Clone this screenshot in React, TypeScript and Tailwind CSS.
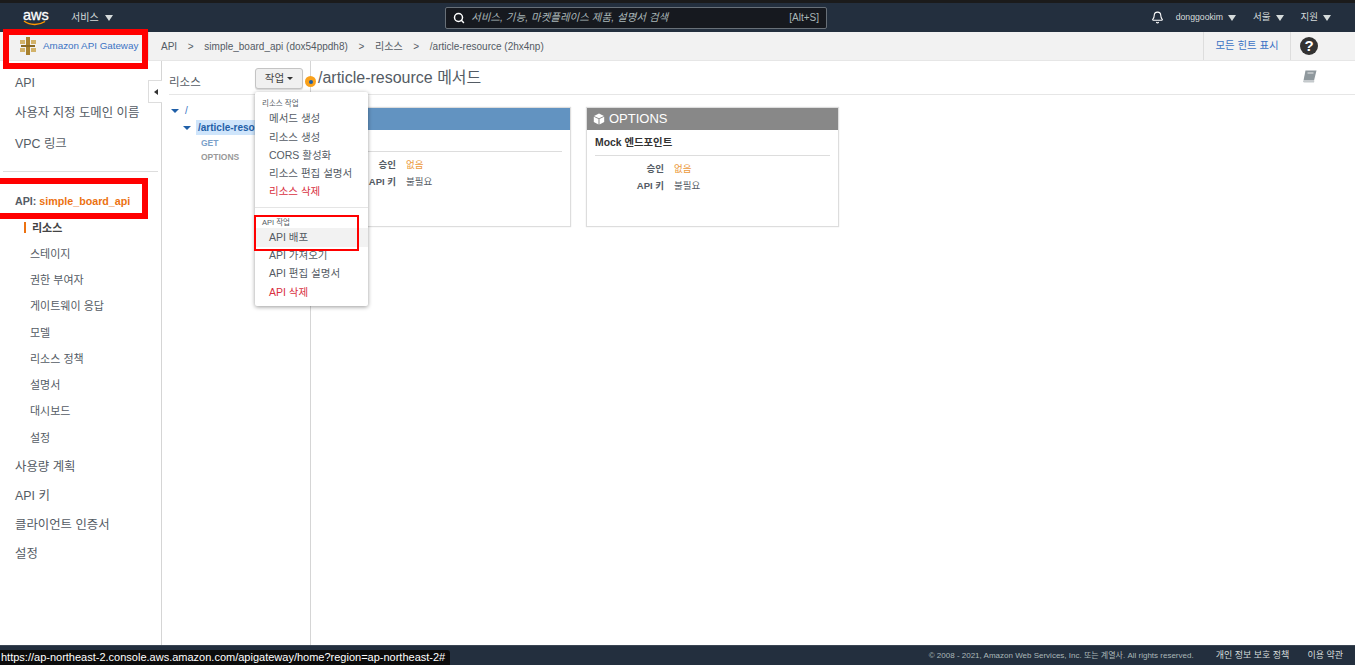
import { Bell, Search } from 'lucide-react';

const font = "font-['Liberation_Sans','Noto_Sans_CJK_KR',sans-serif]";

function Caret() {
  return <span className="inline-block w-0 h-0 border-x-[4px] border-x-transparent border-t-[6px] border-t-[#d5dbdb]" />;
}

function GatewayLogo() {
  return (
    <svg width="16" height="18" viewBox="0 0 16 18">
      <rect x="6" y="0" width="4" height="18" fill="#a9822f" />
      <rect x="0" y="3" width="5" height="4" fill="#d2b269" />
      <rect x="11" y="3" width="5" height="4" fill="#d2b269" />
      <rect x="1" y="8" width="14" height="2" fill="#8a6a25" />
      <rect x="0" y="11" width="5" height="4" fill="#d2b269" />
      <rect x="11" y="11" width="5" height="4" fill="#d2b269" />
    </svg>
  );
}

function TopNav() {
  return (
    <header className="h-8 shrink-0 bg-[#232f3e] border-t-[3px] border-[#1b1b1b] flex items-center text-[#d5dbdb] text-[10px]">
      <div className="w-[71px] pl-[23px] flex flex-col items-start leading-none">
        <span className="text-[14.5px] text-white leading-[12px] [-webkit-text-stroke:0.3px_white]">aws</span>
        <svg width="24" height="6" viewBox="0 0 24 6" className="-mt-px">
          <path d="M1 1c6 4.5 15 4.5 21 .5" fill="none" stroke="#f90" strokeWidth="1.5" />
        </svg>
      </div>
      <div className="w-[374px] flex items-center gap-[6px]">
        <span>서비스</span>
        <Caret />
      </div>
      <div className="w-[382px] h-[22px] bg-[#16191f] border border-[#687078] rounded-[2px] flex items-center pl-[7px] pr-[7px]">
        <Search size={12} strokeWidth={3} className="text-white" />
        <span className="ml-[6px] italic text-[10.5px] text-[#aab7b8] flex-1">서비스, 기능, 마켓플레이스 제품, 설명서 검색</span>
        <span className="text-[#aab7b8]">[Alt+S]</span>
      </div>
      <div className="flex-1 flex items-center justify-end pr-[24px]">
        <Bell size={13} className="text-white mr-[12px]" />
        <span className="text-[8.7px] mr-[5px]">donggookim</span>
        <Caret />
        <span className="ml-[17px] mr-[5px] text-[9.5px]">서울</span>
        <Caret />
        <span className="ml-[17px] mr-[5px] text-[9.5px]">지원</span>
        <Caret />
      </div>
    </header>
  );
}

function Breadcrumbs() {
  return (
    <div className="h-[29px] shrink-0 bg-[#f2f2f2] flex items-center border-b border-[#e6e6e6] text-[10px] text-[#545b64]">
      <div className="w-[149px] h-full flex items-center pl-5 gap-[7px] border-r border-[#dddddd] text-[#3b73c4]">
        <GatewayLogo />
        <span className="text-[9.8px]">Amazon API Gateway</span>
      </div>
      <div className="flex-1 flex items-center pl-3 gap-[10.7px]">
        <span>API</span>
        <span>&gt;</span>
        <span>simple_board_api (dox54ppdh8)</span>
        <span>&gt;</span>
        <span>리소스</span>
        <span>&gt;</span>
        <span>/article-resource (2hx4np)</span>
      </div>
      <div className="w-[88px] h-full flex items-center justify-center border-x border-[#dddddd] text-[#3b73c4] text-[10.4px]">
        모든 힌트 표시
      </div>
      <div className="w-[64px] flex items-center pl-[9px]">
        <span className="w-[18px] h-[18px] rounded-full bg-[#333] text-white text-[15px] font-bold leading-[18px] text-center">?</span>
      </div>
    </div>
  );
}

function NavItem({ label, className = '' }: { label: string; className?: string }) {
  return <div className={`flex items-center ${className}`}>{label}</div>;
}

function Sidebar() {
  return (
    <aside className="w-[162px] shrink-0 border-r border-[#d5d5d5] text-[#545b64] text-[12.4px] relative">
      <div className="pl-[15px] pt-[8px]">
        <NavItem label="API" className="h-[29px]" />
        <NavItem label="사용자 지정 도메인 이름" className="h-[30px]" />
        <NavItem label="VPC 링크" className="h-[33px]" />
      </div>
      <div className="mx-[3px] mt-[10px] border-t border-[#dddddd]" />
      <div className="pl-[15px] mt-[14px] h-[30px] flex items-center font-bold text-[10.7px]">
        API:&nbsp;<span className="text-[#ec7211]">simple_board_api</span>
      </div>
      <div className="pl-[30px] text-[11px] -mt-[1px]">
        <div className="h-[26px] flex items-center pl-[2px] font-bold text-[#444] relative">
          <span className="absolute left-[-6px] top-[7px] w-[2px] h-[11px] bg-[#ec7211]" />
          리소스
        </div>
        {['스테이지', '권한 부여자', '게이트웨이 응답', '모델', '리소스 정책', '설명서', '대시보드', '설정'].map((t) => (
          <NavItem key={t} label={t} className="h-[26.25px]" />
        ))}
      </div>
      <div className="pl-[15px] mt-[2px]">
        {['사용량 계획', 'API 키', '클라이언트 인증서', '설정'].map((t) => (
          <NavItem key={t} label={t} className="h-[29px]" />
        ))}
      </div>
      {/* collapse tab */}
      <div className="absolute right-[-1px] top-[19px] w-[14px] h-[23px] bg-white border border-r-0 border-[#dddddd] flex items-center justify-center">
        <span className="w-0 h-0 border-y-[3px] border-y-transparent border-r-[4px] border-r-[#333]" />
      </div>
    </aside>
  );
}

function MenuItem({ label, danger, active }: { label: string; danger?: boolean; active?: boolean }) {
  return (
    <div className={`h-[18.3px] flex items-center pl-[14px] text-[10.5px] ${danger ? 'text-[#d9303f]' : 'text-[#545b64]'} ${active ? 'bg-[#f2f2f2]' : ''}`}>
      {label}
    </div>
  );
}

function ActionsMenu() {
  return (
    <div className="absolute left-[93px] top-[31px] w-[113px] h-[214px] bg-white rounded-[2px] shadow-[0_1px_4px_rgba(0,0,0,0.4)] pt-[7px] z-10">
      <div className="pl-[7px] text-[7.5px] leading-[10px] text-[#545b64]">리소스 작업</div>
      <div className="h-[1px]" />
      <MenuItem label="메서드 생성" />
      <MenuItem label="리소스 생성" />
      <MenuItem label="CORS 활성화" />
      <MenuItem label="리소스 편집 설명서" />
      <MenuItem label="리소스 삭제" danger />
      <div className="border-t border-[#e5e5e5] mt-[6px] mb-[10px]" />
      <div className="pl-[7px] text-[7.5px] leading-[10px] text-[#545b64]">API 작업</div>
      <MenuItem label="API 배포" active />
      <MenuItem label="API 가져오기" />
      <MenuItem label="API 편집 설명서" />
      <MenuItem label="API 삭제" danger />
    </div>
  );
}

function ResourcePanel() {
  return (
    <section className="w-[149px] shrink-0 border-r border-[#d5d5d5] relative text-[10px]">
      <div className="h-[34px] ml-[7px] pt-[11px] border-b border-[#e6e6e6] flex items-center text-[11.5px] text-[#545b64]">리소스</div>
      <div className="relative">
        <div className="pl-[9px] pt-[6px] h-[25px] flex items-center gap-[6px] text-[#3b73c4]">
          <span className="w-0 h-0 border-x-[4px] border-x-transparent border-t-[4px] border-t-[#1f5fa8]" />/
        </div>
        <div className="pl-[21px] flex items-center gap-[5px] h-[15px]">
          <span className="w-0 h-0 border-x-[4px] border-x-transparent border-t-[4px] border-t-[#1f5fa8]" />
          <span className="bg-[#cfe5fb] text-[#1f5fa8] font-bold pl-[2px] h-[15px] leading-[15px] flex-1 overflow-hidden whitespace-nowrap">/article-resource</span>
        </div>
        <div className="pl-[39px] pt-[1px] text-[8.5px] font-bold leading-[14px]">
          <div className="text-[#7aa0c9]">GET</div>
          <div className="text-[#999]">OPTIONS</div>
        </div>
      </div>
      {/* 작업 button */}
      <div className="absolute left-[93px] top-[7px] w-[48px] h-[21px] rounded-[3px] border border-[#c4c4c4] bg-[#f0f0f0] shadow-[0_1px_1px_rgba(0,0,0,0.15)] flex items-center justify-center gap-[3px] text-[10.5px] text-[#444]">
        작업
        <span className="w-0 h-0 border-x-[3px] border-x-transparent border-t-[3px] border-t-[#333]" />
      </div>
      <ActionsMenu />
      {/* hint dot */}
      <span className="absolute left-[143px] top-[15px] w-[11px] h-[11px] rounded-full bg-[#f9a11b] flex items-center justify-center z-20">
        <span className="w-[4px] h-[4px] rounded-full bg-[#1f5fa8]" />
      </span>
    </section>
  );
}

function MethodCard({ title, header, endpoint, icon, rowClass }: { title: string; header: string; endpoint: string; icon: boolean; rowClass: string }) {
  return (
    <div className="w-[253px] h-[120px] bg-white border border-[#dddddd] shadow-[0_0_1px_rgba(0,0,0,0.15)] text-[9.5px] text-[#545b64]">
      <div className={`h-[22px] flex items-center pl-[6px] gap-[4px] text-white text-[13px] ${header}`}>
        {icon && (
          <svg width="12" height="12" viewBox="0 0 12 12" fill="#fff">
            <path d="M6 .5 11 3 6 5.3 1 3zM.8 3.8l4.7 2.2v5.4L.8 9zM11.2 3.8 6.5 6v5.4L11.2 9z" />
          </svg>
        )}
        {title}
      </div>
      <div className={`mx-[8px] pt-[1px] border-b border-[#dddddd] flex items-center font-bold text-[10.4px] text-[#333] ${rowClass}`}>{endpoint}</div>
      <div className="grid grid-cols-[77px_1fr] gap-x-[10px] pt-[4px] leading-[17px]">
        <span className="text-right font-bold">승인</span>
        <span className="text-[#ec9a3c]">없음</span>
        <span className="text-right font-bold">API 키</span>
        <span>불필요</span>
      </div>
    </div>
  );
}

function BookIcon() {
  return (
    <svg width="15" height="13" viewBox="0 0 15 13" className="-mt-[3px]">
      <path d="M3.5.5h11L12 10.5H1.5z" fill="#8f989d" />
      <path d="M1.5 10.5c-1 1-.3 2 1 2h9.5l2.5-10-2 8.5H2.5z" fill="#c4c9cc" />
      <path d="M5.5 3h6" stroke="#d8dcde" strokeWidth="1.2" />
    </svg>
  );
}

function MethodsPanel() {
  return (
    <main className="flex-1 min-w-0">
      <div className="h-[34px] ml-[7px] pt-[1px] border-b border-[#e6e6e6] flex items-center justify-between pr-[38px] text-[16px] text-[#545b64]">
        <span>/article-resource 메서드</span>
        <BookIcon />
      </div>
      <div className="flex gap-[15px] pl-[7px] pt-[12px]">
        <MethodCard title="GET" header="bg-[#6293c1]" endpoint="Lambda" icon={false} rowClass="h-[22px]" />
        <MethodCard title="OPTIONS" header="bg-[#888888]" endpoint="Mock 엔드포인트" icon rowClass="h-[26px]" />
      </div>
    </main>
  );
}

function Footer() {
  return (
    <footer className="h-[20px] shrink-0 bg-[#232f3e] border-t border-[#3a4553] flex items-center justify-end pr-[12px] text-[#d5dbdb] text-[9px] relative">
      <span className="text-[#aab7b8] text-[8px] mr-[22px]">© 2008 - 2021, Amazon Web Services, Inc. 또는 계열사. All rights reserved.</span>
      <span className="mr-[18px]">개인 정보 보호 정책</span>
      <span>이용 약관</span>
      {/* browser status bubble */}
      <div className="absolute left-0 bottom-0 h-[15px] bg-[#0c0c0c] rounded-tr-[3px] text-white text-[11px] leading-[15px] pl-[1px] pr-[5px] whitespace-nowrap">
        https://ap-northeast-2.console.aws.amazon.com/apigateway/home?region=ap-northeast-2#
      </div>
    </footer>
  );
}

export default function App() {
  return (
    <div className={`${font} w-[1355px] h-[665px] overflow-hidden bg-white flex flex-col relative`}>
      <TopNav />
      <Breadcrumbs />
      <div className="flex-1 flex min-h-0">
        <Sidebar />
        <ResourcePanel />
        <MethodsPanel />
      </div>
      <Footer />
      {/* red annotation boxes */}
      <div className="absolute left-[3px] top-[29px] w-[145px] h-[40px] border-[6px] border-[#ff0000]" />
      <div className="absolute left-0 top-[178px] w-[148px] h-[41px] border-y-[6px] border-r-[6px] border-[#ff0000]" />
      <div className="absolute left-[254px] top-[215px] w-[105px] h-[36px] border-2 border-[#ff0000] z-30" />
    </div>
  );
}
